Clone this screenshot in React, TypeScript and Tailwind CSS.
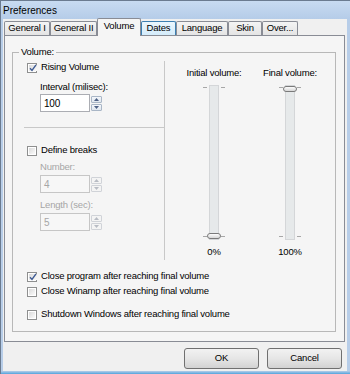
import type { ReactNode } from 'react';

// Petite case à cocher façon Windows 7
function Check({ checked = false }: { checked?: boolean }) {
  return (
    <span className="w-[10px] h-[10px] border border-[#8e8f8f] bg-white p-[1px] flex shrink-0">
      <span className="flex-1 bg-gradient-to-br from-[#dadada] to-[#fbfbfb] flex items-center justify-center">
        {checked && (
          <svg width="8" height="8" viewBox="0 0 8 8">
            <path d="M1 4.2 L3 6.4 L7 0.8" fill="none" stroke="#3d5a93" strokeWidth="1.4" />
          </svg>
        )}
      </span>
    </span>
  );
}

function CheckRow({ checked, children }: { checked?: boolean; children: ReactNode }) {
  return (
    <div className="flex items-center h-[13px] gap-[4px]">
      <Check checked={checked} />
      <span>{children}</span>
    </div>
  );
}

function Arrow({ up, disabled }: { up?: boolean; disabled?: boolean }) {
  return (
    <svg width="5" height="3" viewBox="0 0 5 3">
      <path d={up ? 'M0 3 L2.5 0 L5 3 Z' : 'M0 0 L2.5 3 L5 0 Z'} fill={disabled ? '#b8bcc4' : '#4d6185'} />
    </svg>
  );
}

function Spin({ value, disabled }: { value: string; disabled?: boolean }) {
  return (
    <div className="flex items-center gap-[1px]">
      <div
        className={`w-[50px] h-[18px] border flex items-center pl-[3px] text-[10px] ${
          disabled ? 'border-[#c6c6c6] bg-[#f7f7f7] text-[#a6a6a6]' : 'border-[#abadb3] bg-white text-black'
        }`}
      >
        {value}
      </div>
      <div className="flex flex-col w-[11px] gap-[1px]">
        {[true, false].map((up) => (
          <div
            key={String(up)}
            className={`h-[7px] border rounded-[1px] flex items-center justify-center ${
              disabled ? 'border-[#d0d3d8] bg-[#f4f4f4]' : 'border-[#a9b6c6] bg-gradient-to-b from-[#f4f7fb] to-[#dfe6ee]'
            }`}
          >
            <Arrow up={up} disabled={disabled} />
          </div>
        ))}
      </div>
    </div>
  );
}

function Slider({ label, bottom, atTop }: { label: string; bottom: string; atTop: boolean }) {
  return (
    <div className="w-[60px] flex flex-col items-center">
      <div className="h-[12px] flex items-center whitespace-nowrap">{label}</div>
      <div className="relative w-[40px] h-[155px] mt-[6px] flex justify-center">
        <div className="w-[10px] h-full border border-[#d4d6d8] bg-[#e6e9ea]" />
        {/* graduations */}
        <span className="absolute left-[9px] top-[2px] w-[4px] h-px bg-[#a7a7a7]" />
        <span className="absolute right-[9px] top-[2px] w-[4px] h-px bg-[#a7a7a7]" />
        <span className="absolute left-[9px] bottom-[3px] w-[4px] h-px bg-[#a7a7a7]" />
        <span className="absolute right-[9px] bottom-[3px] w-[4px] h-px bg-[#a7a7a7]" />
        <span
          className={`absolute left-[13px] w-[14px] h-[6px] rounded-[3px] border border-[#7a7a7a] bg-gradient-to-b from-[#fdfdfd] to-[#d7d7d7] ${
            atTop ? 'top-[1px]' : 'bottom-[1px]'
          }`}
        />
      </div>
      <div className="h-[12px] mt-[6px] flex items-center">{bottom}</div>
    </div>
  );
}

const tabs = [
  { name: 'General I', w: 'w-[46px]' },
  { name: 'General II', w: 'w-[47px]' },
  { name: 'Volume', w: 'w-[44px]', active: true },
  { name: 'Dates', w: 'w-[35px]', hot: true },
  { name: 'Language', w: 'w-[52px]' },
  { name: 'Skin', w: 'w-[34px]' },
  { name: 'Over...', w: 'w-[36px]' },
];

export default function App() {
  return (
    <div className="w-[350px] h-[374px] flex flex-col bg-[#b7cde8] border-t border-l border-[#6b7b90] font-['Liberation_Sans',Arial,sans-serif] text-[9.5px] tracking-[-0.2px] text-black select-none">
      {/* barre de titre */}
      <div className="h-[18px] flex items-center pl-[2px] bg-gradient-to-b from-[#c8dbf1] to-[#b5cce8] text-[10px] tracking-normal">
        Preferences
      </div>

      <div className="flex-1 flex flex-col bg-[#f0f0f0] ml-[2px] mr-[3px]">
        {/* onglets */}
        <div className="h-[16px] flex items-end pl-[1px]">
          {tabs.map((t) => (
            <div
              key={t.name}
              className={`${t.w} flex items-center justify-center border border-b-0 rounded-t-[2px] ${
                t.active
                  ? 'h-[18px] -mb-px relative bg-[#f5f5f5] border-[#898c95] pb-[3px]'
                  : t.hot
                  ? 'h-[14px] bg-gradient-to-b from-[#eaf6fd] to-[#d4ecfb] border-[#3c7fb1]'
                  : 'h-[14px] bg-gradient-to-b from-[#f4f4f4] to-[#e4e4e4] border-[#898c95]'
              }`}
            >
              {t.name}
            </div>
          ))}
        </div>

        {/* panneau */}
        <div className="ml-[1px] mr-[2px] border border-[#898c95] bg-[#f5f5f5] pt-[10px] pb-[9px] pl-[7px] pr-[8px]">
          <fieldset className="border border-[#b8b8b8] px-0 pb-[10px] m-0 min-w-0">
            <legend className="ml-[6px] px-[2px] h-[12px] leading-[12px]">Volume:</legend>

            <div className="flex h-[199px] mt-[3px]">
              {/* colonne gauche */}
              <div className="w-[151px] flex flex-col pl-[14px]">
                <CheckRow checked>Rising Volume</CheckRow>
                <div className="pl-[13px] flex flex-col">
                  <div className="h-[12px] mt-[7px] flex items-center">Interval (milisec):</div>
                  <div className="mt-[1px]">
                    <Spin value="100" />
                  </div>
                </div>
                <div className="h-px bg-[#c8c8c8] mt-[15px] ml-[-3px] mr-[-1px]" />
                <div className="mt-[16px]">
                  <CheckRow>Define breaks</CheckRow>
                </div>
                <div className="pl-[13px] flex flex-col text-[#a6a6a6]">
                  <div className="h-[12px] mt-[4px] flex items-center">Number:</div>
                  <div className="mt-[2px]">
                    <Spin value="4" disabled />
                  </div>
                  <div className="h-[12px] mt-[6px] flex items-center">Length (sec):</div>
                  <div className="mt-[2px]">
                    <Spin value="5" disabled />
                  </div>
                </div>
              </div>

              <div className="w-px bg-[#c8c8c8]" />

              {/* colonne droite : curseurs */}
              <div className="flex-1 flex pl-[19px] gap-[16px] pt-[6px]">
                <Slider label="Initial volume:" bottom="0%" atTop={false} />
                <Slider label="Final volume:" bottom="100%" atTop />
              </div>
            </div>

            <div className="flex flex-col pl-[14px]">
              <div className="mt-[10px]">
                <CheckRow checked>Close program after reaching final volume</CheckRow>
              </div>
              <div className="mt-[2px]">
                <CheckRow>Close Winamp after reaching final volume</CheckRow>
              </div>
              <div className="mt-[10px]">
                <CheckRow>Shutdown Windows after reaching final volume</CheckRow>
              </div>
            </div>
          </fieldset>
        </div>

        {/* boutons */}
        <div className="flex justify-end gap-[8px] mt-[6px] pr-[5px]">
          {['OK', 'Cancel'].map((b) => (
            <button
              key={b}
              type="button"
              className="w-[75px] h-[21px] rounded-[3px] border border-[#707070] bg-gradient-to-b from-[#f2f2f2] via-[#e6e6e6] to-[#d2d2d2] flex items-center justify-center"
            >
              {b}
            </button>
          ))}
        </div>
        <div className="flex-1" />
      </div>
      <div className="h-[3px] bg-gradient-to-b from-[#b7cde8] to-[#4ea4dc]" />
    </div>
  );
}
